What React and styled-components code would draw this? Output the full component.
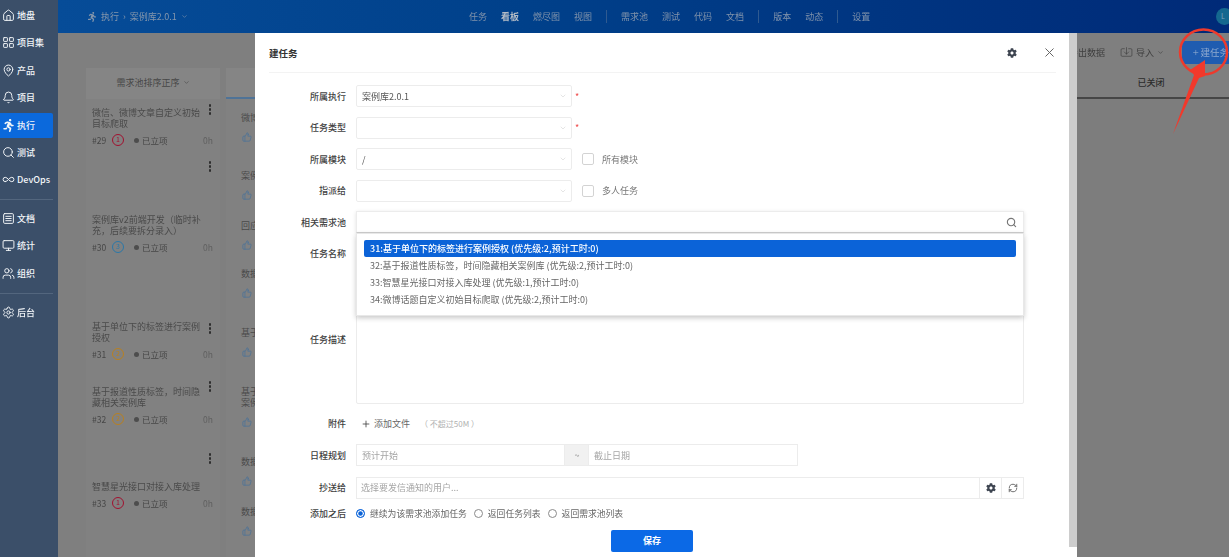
import styled, { createGlobalStyle } from "styled-components";
import {
  Home,
  LayoutGrid,
  MapPin,
  Bell,
  Search,
  Infinity as InfinityIcon,
  SquareMenu,
  Monitor,
  Users,
  Settings,
  ThumbsUp,
  Plus,
  X,
  RefreshCw,
  ChevronDown,
  Import,
} from "lucide-react";
import { FaRunning, FaCog } from "react-icons/fa";

const GlobalStyle = createGlobalStyle`
  html, body {
    margin: 0;
    padding: 0;
    height: 100%;
    overflow: hidden;
    background: #7f7f7f;
  }
  * { box-sizing: border-box; }
  body {
    font-family: "Noto Sans CJK SC", "Noto Sans", sans-serif;
    font-size: 9px;
  }
`;

const Page = styled.div`
  position: relative;
  width: 1229px;
  height: 557px;
  display: flex;
  overflow: hidden;
  filter: blur(0.45px);
`;

const Sidebar = styled.nav`
  width: 58px;
  flex: none;
  background: #3b4f69;
  padding-top: 3px;
  display: flex;
  flex-direction: column;
`;

const SideItem = styled.div`
  width: 53px;
  height: 25px;
  margin-bottom: 2.4px;
  padding-left: 2px;
  display: flex;
  align-items: center;
  gap: 2px;
  color: #f2f5f8;
  font-size: 9px;
  font-weight: 500;
  white-space: nowrap;
  border-radius: 0 2px 2px 0;
  background: ${(p) => (p.$active ? "#0b69dc" : "transparent")};
`;

const SideDivider = styled.div`
  width: 53px;
  height: 1px;
  background: #53667e;
  margin: ${(p) => p.$top}px 0 6px;
`;

const Main = styled.div`
  flex: 1;
  min-width: 0;
  display: flex;
  flex-direction: column;
`;

const Header = styled.header`
  height: 33px;
  flex: none;
  background: linear-gradient(90deg, #064c98 0%, #00408a 40%, #002a78 100%);
  color: #8496ac;
  display: flex;
  align-items: center;
  padding-left: 29px;
  position: relative;
`;

const Crumb = styled.div`
  width: 382px;
  display: flex;
  align-items: center;
  gap: 4px;
  font-size: 9px;
`;

const TopNav = styled.div`
  display: flex;
  align-items: center;
  gap: 14px;
`;

const TopLink = styled.span`
  color: ${(p) => (p.$active ? "#b4bcc6" : "#8093ab")};
  font-size: 9px;
  font-weight: ${(p) => (p.$active ? 700 : 400)};
`;

const TopDivider = styled.span`
  width: 1px;
  height: 13px;
  background: #2f5a90;
`;

const Avatar = styled.div`
  position: absolute;
  right: -4px;
  top: 8px;
  width: 17px;
  height: 17px;
  border-radius: 50%;
  background: #14688f;
  color: #7fa6bd;
  font-size: 7px;
  line-height: 17px;
  padding-left: 5px;
`;

const Toolbar = styled.div`
  height: 35px;
  flex: none;
  display: flex;
  justify-content: flex-end;
  align-items: center;
  padding-top: 3px;
  color: #3e3e3e;
`;

const ToolLink = styled.span`
  display: flex;
  align-items: center;
  gap: 3px;
  font-size: 9px;
  margin-right: ${(p) => p.$mr}px;
`;

const NewButton = styled.div`
  width: 47px;
  height: 23px;
  background: #1f5cb0;
  color: #8ea9cf;
  border-radius: 3px 0 0 3px;
  display: flex;
  align-items: center;
  gap: 1px;
  font-size: 9.5px;
  white-space: nowrap;
  overflow: hidden;
  padding-left: 10px;
`;

const Board = styled.div`
  flex: 1;
  display: flex;
  padding-left: 28px;
  min-height: 0;
`;

const Column = styled.section`
  width: ${(p) => (p.$width ? `${p.$width}px` : "auto")};
  flex: ${(p) => (p.$width ? "none" : 1)};
  margin-right: ${(p) => p.$mr ?? 0}px;
  background: ${(p) => p.$bg ?? "#818181"};
  display: flex;
  flex-direction: column;
`;

const ColumnHead = styled.div`
  height: 31px;
  flex: none;
  display: flex;
  align-items: center;
  justify-content: center;
  gap: 3px;
  font-size: 9px;
  padding-right: ${(p) => (p.$dark ? 4 : 0)}px;
  color: ${(p) => (p.$dark ? "#2b2b2b" : "#474747")};
  font-weight: ${(p) => (p.$dark ? 500 : 400)};
  background: ${(p) => p.$bg ?? "#858585"};
  border-bottom: 2px solid ${(p) => p.$line ?? "transparent"};
`;

const Card = styled.article`
  position: relative;
  height: ${(p) => p.$h}px;
  margin-bottom: ${(p) => p.$mb ?? 0}px;
  padding: 0 4px 0 6px;
  display: flex;
  flex-direction: column;
  justify-content: flex-end;
  color: #474747;
`;

const CardTitle = styled.div`
  font-size: 9px;
  line-height: 11px;
  width: 111px;
  color: #4a4a4a;
`;

const CardMeta = styled.div`
  display: flex;
  align-items: center;
  height: 12px;
  margin: 5px 0 1px;
  font-size: 8.5px;
  color: #464646;
`;

const CardNumber = styled.span`
  width: 20px;
`;

const Priority = styled.span`
  width: 12px;
  height: 12px;
  border-radius: 50%;
  border: 1.5px solid ${(p) => p.$color};
  color: ${(p) => p.$color};
  font-size: 7px;
  line-height: 9px;
  text-align: center;
  margin-right: 10px;
`;

const StatusDot = styled.span`
  width: 5px;
  height: 5px;
  border-radius: 50%;
  background: #4d4d4d;
  margin-right: 3px;
`;

const Hours = styled.span`
  margin-left: auto;
  margin-right: 3px;
  color: #5f5f5f;
`;

const MoreDots = styled.span`
  position: absolute;
  right: 9px;
  top: 5px;
  width: 2.5px;
  height: 2.5px;
  background: #2e2e2e;
  box-shadow: 0 4px 0 #2e2e2e, 0 8px 0 #2e2e2e;
  border-radius: 50%;
`;

const SideCard = styled.div`
  height: ${(p) => p.$h}px;
  padding-left: 15px;
  display: flex;
  flex-direction: column;
  justify-content: flex-end;
  font-size: 9px;
  line-height: 11px;
  color: #4a4a4a;
  white-space: nowrap;
`;

const Thumb = styled(ThumbsUp)`
  margin: 9px 0 0 1px;
  color: #4f7397;
`;

const Backdrop = styled.div`
  position: absolute;
  left: 255px;
  top: 33px;
  width: 822px;
  height: 524px;
  background: #fff;
  color: #333;
`;

const ScrollTrack = styled.div`
  position: absolute;
  right: 0;
  top: 0;
  width: 8px;
  height: 514px;
  background: #cdcdcd;
`;

const ModalHead = styled.div`
  height: 40px;
  margin: 0 21px 0 14px;
  border-bottom: 1px solid #f3f3f3;
  display: flex;
  align-items: center;
  justify-content: space-between;
  font-weight: 700;
  font-size: 9.5px;
`;

const HeadIcons = styled.div`
  display: flex;
  align-items: center;
  gap: 25px;
  margin-right: -1px;
  color: #3d4450;
`;

const Form = styled.div`
  padding-top: 12px;
  display: flex;
  flex-direction: column;
`;

const Field = styled.div`
  display: grid;
  grid-template-columns: 91px 1fr;
  column-gap: 10px;
  align-items: center;
  min-height: ${(p) => p.$h ?? 22}px;
  margin-bottom: ${(p) => p.$mb ?? 9.5}px;
`;

const Label = styled.label`
  text-align: right;
  font-size: 9px;
  font-weight: 500;
  color: #3f3f3f;
`;

const Line = styled.div`
  position: relative;
  display: flex;
  align-items: center;
`;

const Select = styled.div`
  width: 216px;
  height: 22px;
  border: 1px solid #ececec;
  border-radius: 2px;
  display: flex;
  align-items: center;
  justify-content: space-between;
  padding: 0 4px 0 5px;
  font-size: 9px;
  color: #555;
`;

const Required = styled.span`
  color: #ef4b4b;
  margin-left: 3px;
  font-size: 9px;
`;

const Check = styled.span`
  width: 12px;
  height: 12px;
  border: 1px solid #d3d3d3;
  border-radius: 2px;
  margin: 0 8px 0 10px;
`;

const Hint = styled.span`
  color: #777;
  font-size: 9px;
`;

const SearchBox = styled.div`
  width: 668px;
  height: 22px;
  border: 1px solid #ececec;
  border-bottom-color: #cfcfcf;
  box-shadow: 0 1px 4px rgba(0, 0, 0, 0.12);
  display: flex;
  align-items: center;
  justify-content: flex-end;
  padding-right: 6px;
  color: #777;
`;

const Dropdown = styled.ul`
  position: absolute;
  left: 0;
  top: 22px;
  z-index: 2;
  width: 668px;
  height: 83px;
  margin: 0;
  padding: 6px 7px;
  list-style: none;
  background: #fff;
  border: 1px solid #e8e8e8;
  box-shadow: 0 2px 5px rgba(0, 0, 0, 0.22);
`;

const Option = styled.li`
  height: 17px;
  line-height: 17px;
  padding-left: 6px;
  font-size: 9px;
  white-space: nowrap;
  border-radius: 2px;
  font-weight: ${(p) => (p.$selected ? 500 : 400)};
  color: ${(p) => (p.$selected ? "#fff" : "#666")};
  background: ${(p) => (p.$selected ? "#0b63d8" : "transparent")};
`;

const TextBox = styled.div`
  width: 668px;
  height: ${(p) => p.$h ?? 22}px;
  border: 1px solid #ececec;
  border-radius: 2px;
`;

const AddFile = styled.div`
  display: flex;
  align-items: center;
  gap: 3px;
  font-size: 9px;
  color: #666;
  padding-left: 5px;
`;

const Faint = styled.span`
  color: #b0b0b0;
  font-size: 8px;
  margin-left: 7px;
`;

const InputCell = styled.div`
  width: ${(p) => p.$w}px;
  height: 22px;
  border: 1px solid #ececec;
  margin-left: ${(p) => (p.$joined ? -1 : 0)}px;
  padding-left: ${(p) => (p.$small ? 4 : 5)}px;
  display: flex;
  align-items: center;
  font-size: 9px;
  color: #a5a5a5;
`;

const Addon = styled.div`
  width: 24px;
  height: 22px;
  background: #f1f1f1;
  border-top: 1px solid #ececec;
  border-bottom: 1px solid #ececec;
  display: flex;
  align-items: center;
  justify-content: center;
  color: #888;
  font-size: 9px;
`;

const IconCell = styled.div`
  width: 23px;
  height: 22px;
  margin-left: -1px;
  border: 1px solid #ececec;
  display: flex;
  align-items: center;
  justify-content: center;
  color: ${(p) => p.$color ?? "#3d4450"};
`;

const Radio = styled.span`
  width: 9px;
  height: 9px;
  border-radius: 50%;
  border: 1px solid ${(p) => (p.$on ? "#0b63d8" : "#8a8a8a")};
  background: ${(p) => (p.$on ? "#0b63d8" : "#fff")};
  box-shadow: ${(p) => (p.$on ? "inset 0 0 0 1.2px #fff" : "none")};
  margin: 0 5px 0 ${(p) => p.$ml ?? 0}px;
`;

const RadioText = styled.span`
  font-size: 8.8px;
  color: #666;
`;

const Footer = styled.div`
  display: flex;
  padding-left: 356px;
  margin-top: -1px;
`;

const SaveButton = styled.button`
  width: 82px;
  height: 22px;
  border: 0;
  border-radius: 2px;
  background: #0b69e6;
  color: #fff;
  font-family: inherit;
  font-size: 9px;
  font-weight: 700;
`;

const Annotation = styled.svg`
  position: absolute;
  left: 1160px;
  top: 20px;
`;

const sideItems = [
  { Icon: Home, text: "地盘" },
  { Icon: LayoutGrid, text: "项目集" },
  { Icon: MapPin, text: "产品" },
  { Icon: Bell, text: "项目" },
  { Icon: FaRunning, text: "执行", active: true },
  { Icon: Search, text: "测试" },
  { Icon: InfinityIcon, text: "DevOps" },
];

const sideItems2 = [
  { Icon: SquareMenu, text: "文档" },
  { Icon: Monitor, text: "统计" },
  { Icon: Users, text: "组织" },
];

const cards = [
  { id: 29, title: "微信、微博文章自定义初始目标爬取", p: 1, h: 48, mb: 9 },
  { id: 30, title: "案例库v2前端开发（临时补充，后续要拆分录入）", p: 3, h: 98, mb: 64 },
  { id: 31, title: "基于单位下的标签进行案例授权", p: 2, h: 43, mb: 15 },
  { id: 32, title: "基于报道性质标签，时间隐藏相关案例库", p: 2, h: 50, mb: 22 },
  { id: 33, title: "智慧星光接口对接入库处理", p: 1, h: 62 },
];

const priorityColors = { 1: "#a2102f", 2: "#b9801f", 3: "#2b78a8" };

const sideCards = [
  { text: "微博", h: 43 },
  { text: "案例", h: 58 },
  { text: "回应", h: 50 },
  { text: "数据", h: 48 },
  { text: "基于", h: 59 },
  { text: "基于", line2: "案例", h: 70 },
  { text: "数据", h: 59 },
  { text: "数据", h: 50 },
];

const options = [
  "31:基于单位下的标签进行案例授权 (优先级:2,预计工时:0)",
  "32:基于报道性质标签，时间隐藏相关案例库 (优先级:2,预计工时:0)",
  "33:智慧星光接口对接入库处理 (优先级:1,预计工时:0)",
  "34:微博话题自定义初始目标爬取 (优先级:2,预计工时:0)",
];

const Caret = () => <ChevronDown size={8} strokeWidth={2} color="#d8d8d8" />;

const App = () => {
  return (
    <Page>
      <GlobalStyle />
      <Sidebar>
        {sideItems.map(({ Icon, text, active }) => (
          <SideItem key={text} $active={active}>
            <Icon size={13} strokeWidth={1.8} />
            {text}
          </SideItem>
        ))}
        <SideDivider $top={4} />
        {sideItems2.map(({ Icon, text }) => (
          <SideItem key={text}>
            <Icon size={13} strokeWidth={1.8} />
            {text}
          </SideItem>
        ))}
        <SideDivider $top={5} />
        <SideItem>
          <Settings size={13} strokeWidth={1.8} />
          后台
        </SideItem>
      </Sidebar>

      <Main>
        <Header>
          <Crumb>
            <FaRunning size={10} />
            执行
            <span>›</span>
            <span>案例库2.0.1</span>
            <ChevronDown size={7} />
          </Crumb>
          <TopNav>
            <TopLink>任务</TopLink>
            <TopLink $active>看板</TopLink>
            <TopLink>燃尽图</TopLink>
            <TopLink>视图</TopLink>
            <TopDivider />
            <TopLink>需求池</TopLink>
            <TopLink>测试</TopLink>
            <TopLink>代码</TopLink>
            <TopLink>文档</TopLink>
            <TopDivider />
            <TopLink>版本</TopLink>
            <TopLink>动态</TopLink>
            <TopDivider />
            <TopLink>设置</TopLink>
          </TopNav>
          <Avatar>L</Avatar>
        </Header>

        <Toolbar>
          <ToolLink $mr={15}>导出数据</ToolLink>
          <ToolLink $mr={18}>
            <Import size={13} strokeWidth={1.2} />
            导入
            <ChevronDown size={7} />
          </ToolLink>
          <NewButton>
            <Plus size={11} />
            建任务
          </NewButton>
        </Toolbar>

        <Board>
          <Column $width={134} $mr={6}>
            <ColumnHead>
              需求池排序正序
              <ChevronDown size={7} />
            </ColumnHead>
            {cards.map((c) => (
              <Card key={c.id} $h={c.h} $mb={c.mb}>
                <MoreDots />
                <CardTitle>{c.title}</CardTitle>
                <CardMeta>
                  <CardNumber>#{c.id}</CardNumber>
                  <Priority $color={priorityColors[c.p]}>{c.p}</Priority>
                  <StatusDot />
                  已立项
                  <Hours>0h</Hours>
                </CardMeta>
              </Card>
            ))}
          </Column>
          <Column>
            <ColumnHead $line="#4f7397" />
            {sideCards.map((c, i) => (
              <SideCard key={i} $h={c.h}>
                <span>{c.text}</span>
                {c.line2 && <span>{c.line2}</span>}
                <Thumb size={10} />
              </SideCard>
            ))}
          </Column>
          <Column $width={152} $bg="#7d7d7d">
            <ColumnHead $dark $bg="#7f7f7f" $line="#464646">
              已关闭
            </ColumnHead>
          </Column>
        </Board>
      </Main>

      <Backdrop>
        <ScrollTrack />
        <ModalHead>
          建任务
          <HeadIcons>
            <FaCog size={10} />
            <X size={15} strokeWidth={1.6} color="#666" />
          </HeadIcons>
        </ModalHead>
        <Form>
          <Field>
            <Label>所属执行</Label>
            <Line>
              <Select>
                案例库2.0.1
                <Caret />
              </Select>
              <Required>*</Required>
            </Line>
          </Field>
          <Field>
            <Label>任务类型</Label>
            <Line>
              <Select>
                <span />
                <Caret />
              </Select>
              <Required>*</Required>
            </Line>
          </Field>
          <Field>
            <Label>所属模块</Label>
            <Line>
              <Select>
                /
                <Caret />
              </Select>
              <Check />
              <Hint>所有模块</Hint>
            </Line>
          </Field>
          <Field>
            <Label>指派给</Label>
            <Line>
              <Select>
                <span />
                <Caret />
              </Select>
              <Check />
              <Hint>多人任务</Hint>
            </Line>
          </Field>
          <Field>
            <Label>相关需求池</Label>
            <Line>
              <SearchBox>
                <Search size={11} strokeWidth={2.5} />
              </SearchBox>
              <Dropdown>
                {options.map((o, i) => (
                  <Option key={o} $selected={i === 0}>
                    {o}
                  </Option>
                ))}
              </Dropdown>
            </Line>
          </Field>
          <Field>
            <Label>任务名称</Label>
            <TextBox />
          </Field>
          <Field $h={130} $mb={8.5}>
            <Label>任务描述</Label>
            <TextBox $h={130} />
          </Field>
          <Field>
            <Label>附件</Label>
            <AddFile>
              <Plus size={10} color="#444" />
              添加文件
              <Faint>（ 不超过50M ）</Faint>
            </AddFile>
          </Field>
          <Field $mb={10.5}>
            <Label>日程规划</Label>
            <Line>
              <InputCell $w={209}>预计开始</InputCell>
              <Addon>~</Addon>
              <InputCell $w={210} $joined>截止日期</InputCell>
            </Line>
          </Field>
          <Field $mb={5}>
            <Label>抄送给</Label>
            <Line>
              <InputCell $w={624} $small>选择要发信通知的用户...</InputCell>
              <IconCell>
                <FaCog size={10} />
              </IconCell>
              <IconCell $color="#555">
                <RefreshCw size={10} />
              </IconCell>
            </Line>
          </Field>
          <Field $h={20} $mb={7}>
            <Label>添加之后</Label>
            <Line>
              <Radio $on />
              <RadioText>继续为该需求池添加任务</RadioText>
              <Radio $ml={7} />
              <RadioText>返回任务列表</RadioText>
              <Radio $ml={7} />
              <RadioText>返回需求池列表</RadioText>
            </Line>
          </Field>
          <Footer>
            <SaveButton>保存</SaveButton>
          </Footer>
        </Form>
      </Backdrop>

      <Annotation width={70} height={120} viewBox="1160 20 70 120">
        <ellipse cx="1203.5" cy="52" rx="23.5" ry="22.5" fill="none" stroke="#ee3a2c" strokeWidth="2.5" />
        <polygon points="1205,60 1190,70 1194,75 1173,134 1199,78 1205,76" fill="#f2392b" />
      </Annotation>
    </Page>
  );
};

export default App;
